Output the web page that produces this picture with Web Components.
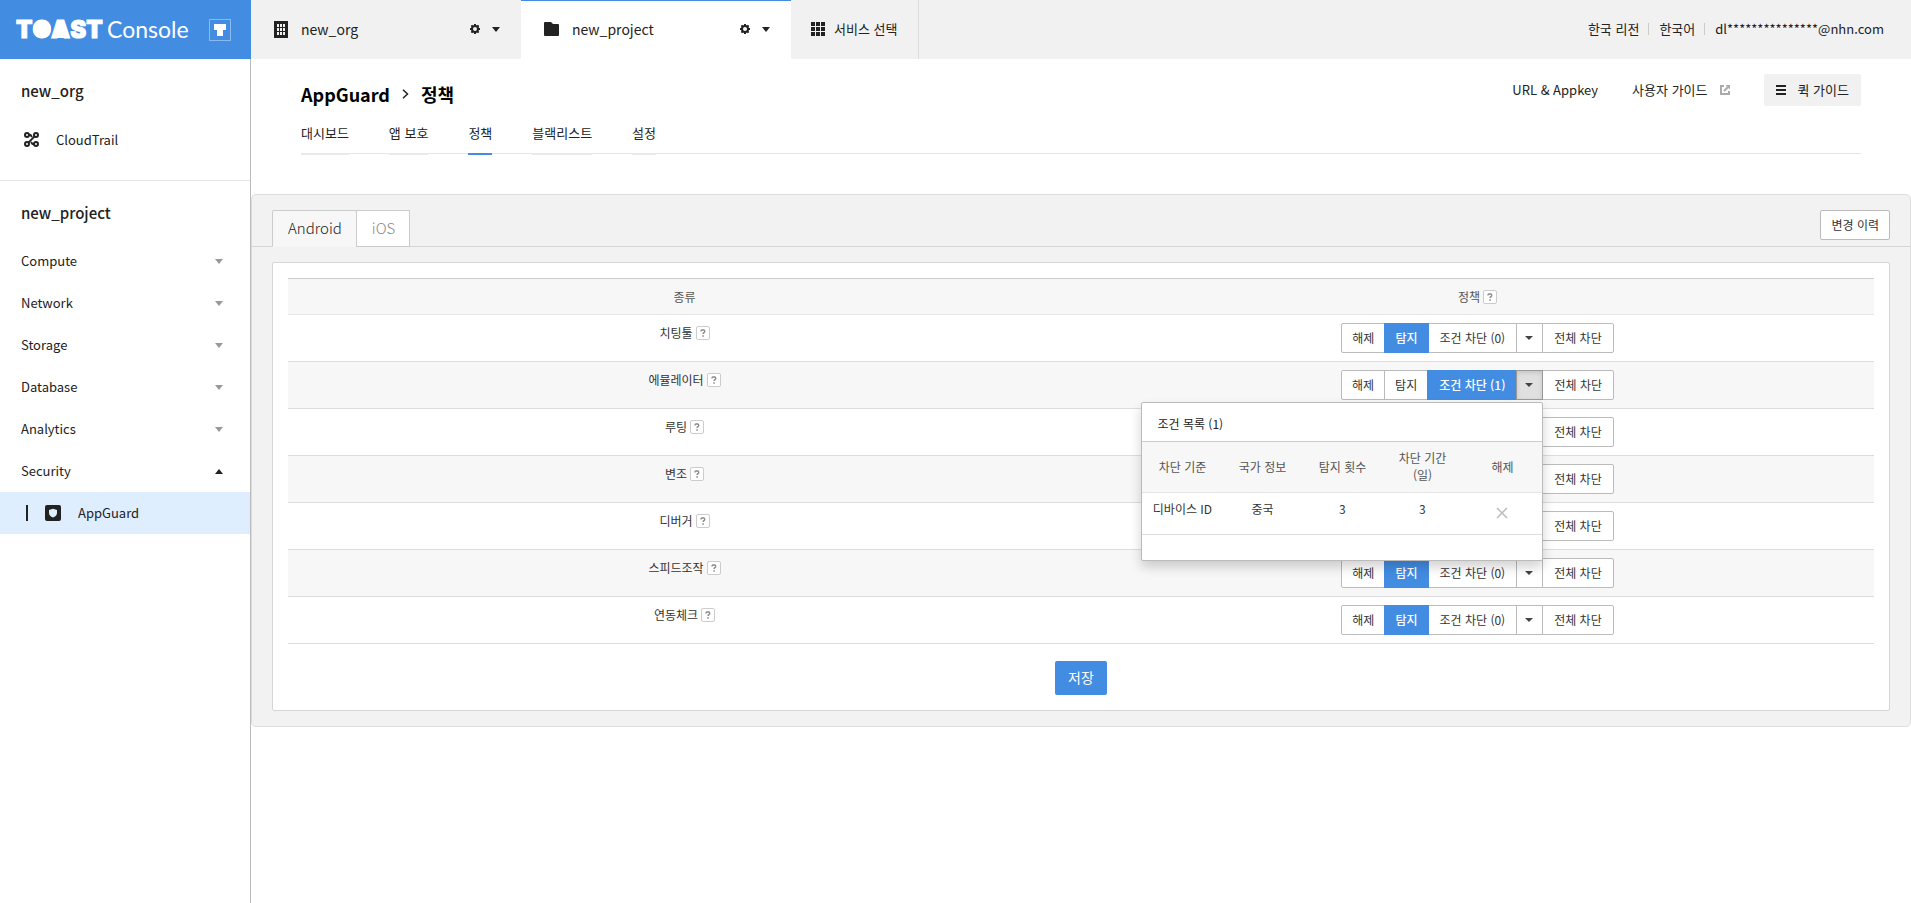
<!DOCTYPE html>
<html lang="ko">
<head>
<meta charset="utf-8">
<title>TOAST Console</title>
<style>
  html, body {
    margin: 0;
    min-height: 100vh;
  }
  body {
    --blue: #428ce2;
    --ink: #222;
    --grey: #f1f1f1;
    --line: #ddd;
    font-family: "Noto Sans CJK KR", "Noto Sans", sans-serif;
    font-size: 13px;
    line-height: 20px;
    color: var(--ink);
    background: #fff;
  }
</style>
</head>
<body>
<console-app></console-app>

<script>
(function () {
  'use strict';

  const ICONS = {
    building: '<svg width="14" height="17" viewBox="0 0 14 17"><path fill="#222" d="M0 0h14v17H0z"/><path fill="#f1f1f1" d="M3 3h2v3H3zM6 3h2v3H6zM9 3h2v3H9zM3 7h2v3H3zM6 7h2v3H6zM9 7h2v3H9zM3 11h2v3H3zM6 11h2v3H6zM9 11h2v3H9z"/></svg>',
    folder: '<svg width="15" height="14" viewBox="0 0 15 14"><path fill="#222" d="M1 0h6l2 2h5a1 1 0 0 1 1 1v10a1 1 0 0 1-1 1H1a1 1 0 0 1-1-1V1a1 1 0 0 1 1-1z"/></svg>',
    grid: '<svg width="14" height="14" viewBox="0 0 14 14"><path fill="#222" d="M0 0h4v4H0zM5 0h4v4H5zM10 0h4v4h-4zM0 5h4v4H0zM5 5h4v4H5zM10 5h4v4h-4zM0 10h4v4H0zM5 10h4v4H5zM10 10h4v4h-4z"/></svg>',
    gear: '<svg width="10" height="10" viewBox="0 0 10 10"><circle cx="5" cy="5" r="3" fill="none" stroke="#222" stroke-width="2"/><path stroke="#222" stroke-width="2" d="M5 0v2M5 8v2M0 5h2M8 5h2M1.4 1.4l1.2 1.2M7.4 7.4l1.2 1.2M8.6 1.4L7.4 2.6M2.6 7.4L1.4 8.6"/></svg>',
    down: '<svg width="8" height="5" viewBox="0 0 8 5"><path fill="currentColor" d="M0 0h8L4 5z"/></svg>',
    caret: '<svg width="8" height="4" viewBox="0 0 8 4"><path fill="currentColor" d="M0 0h8L4 4z"/></svg>',
    up: '<svg width="8" height="5" viewBox="0 0 8 5"><path fill="currentColor" d="M0 5h8L4 0z"/></svg>',
    trail: '<svg width="15" height="15" viewBox="0 0 15 15" fill="none" stroke="#222" stroke-width="2"><circle cx="3" cy="3" r="2"/><circle cx="12" cy="3" r="2"/><circle cx="3" cy="12" r="2"/><circle cx="12" cy="12" r="2"/><path d="M4.4 10.6l6.2-6.2M5 3h1.5L8 5M10 12H8.500L7 10"/></svg>',
    guard: '<svg width="16" height="16" viewBox="0 0 16 16"><rect width="16" height="16" rx="2" fill="#222"/><path fill="#dfeeff" d="M4 5l4-1.200L12 5v3c0 2.200-1.600 3.600-4 4.600C5.600 11.600 4 10.200 4 8z"/></svg>',
    external: '<svg width="10" height="10" viewBox="0 0 10 10" fill="none" stroke="#aaa" stroke-width="2"><path d="M4 1H1v8h8V6"/><path d="M4 6l4-4"/><path fill="#aaa" stroke="none" d="M5.500 0H10v4.500z"/></svg>',
    menu: '<svg width="10" height="10" viewBox="0 0 10 10"><path fill="#222" d="M0 0h10v2H0zM0 4h10v2H0zM0 8h10v2H0z"/></svg>',
    chevron: '<svg width="7" height="10" viewBox="0 0 7 10" fill="none" stroke="#222" stroke-width="1.500"><path d="M1 .7L5.500 5 1 9.300"/></svg>',
    close: '<svg width="12" height="12" viewBox="0 0 12 12" stroke="#bbb" stroke-width="1.500"><path d="M1 1l10 10M11 1L1 11"/></svg>',
    help: '<svg width="14" height="14" viewBox="0 0 14 14"><rect x=".5" y=".5" width="13" height="13" rx="1.500" fill="#fff" stroke="#ccc"/><path d="M5 5.400V5a1 1 0 0 1 1-1h1.700a1 1 0 0 1 1 1v.8c0 .9-1.700.8-1.700 2.200" fill="none" stroke="#888" stroke-width="1.300"/><path fill="#888" d="M6.300 9.300h1.500v1.400H6.300z"/></svg>',
    mark: '<svg width="22" height="22" viewBox="0 0 22 22"><rect x=".5" y=".5" width="21" height="21" fill="none" stroke="#8dbaee"/><path fill="#fff" d="M5 5h12v6h-3v6H8v-6H5z"/></svg>'
  };

  const BASE = `
    * { box-sizing: border-box; }
    a { color: inherit; text-decoration: none; }
    button { font: inherit; color: inherit; background: none; border: 0; margin: 0; padding: 0; cursor: pointer; }
    svg { display: block; }
  `;

  function define(name, css, html) {
    customElements.define(name, class extends HTMLElement {
      constructor() {
        super();
        this.attachShadow({ mode: 'open' });
      }

      connectedCallback() {
        const body = typeof html === 'function' ? html(this) : html;
        this.shadowRoot.innerHTML = `<style>${BASE}${css}</style>${body}`;
      }
    });
  }

  define('c-icon', `
    :host { display: block; flex: none; }
  `, el => ICONS[el.getAttribute('name')]);

  define('help-tip', `
    :host { display: inline-block; vertical-align: -2px; margin-left: 3px; }
    button { display: block; }
  `, '<button type="button" aria-label="도움말"><c-icon name="help"></c-icon></button>');

  // Header

  define('toast-logo', `
    :host { display: flex; align-items: center; justify-content: space-between; padding: 0 20px 0 16px; background: var(--blue); color: #fff; }
    a { display: flex; align-items: center; gap: 3px; padding-bottom: 2px; }
    .word { overflow: visible; fill: #fff; }
    .word text { font: 900 24px Inter, sans-serif; font-kerning: none; stroke: #fff; stroke-width: 1; }
    .name { font: 23px/30px Lato, sans-serif; }
  `, `
    <a href="#">
      <svg class="word" width="88" height="30" viewBox="0 0 88 30">
        <circle cx="26" cy="15" r="9"/>
        <path d="M45 6l9 18H36z"/>
        <text x="0" y="24">TOAST</text>
      </svg>
      <span class="name">Console</span>
    </a>
    <c-icon name="mark"></c-icon>
  `);

  define('context-tab', `
    :host { display: flex; align-items: center; width: 270px; padding: 0 21px 2px 23px; border-top: 1px solid transparent; font-size: 14px; }
    :host([active]) { background: #fff; border-top-color: var(--blue); }
    a { display: flex; align-items: center; gap: 13px; flex: 1; }
    button { display: block; margin-left: 12px; }
    slot { display: block; }
  `, el => `
    <a href="#"><c-icon name="${el.getAttribute('icon')}"></c-icon><slot></slot></a>
    <button type="button" aria-label="설정"><c-icon name="gear"></c-icon></button>
    <button type="button" aria-label="목록"><c-icon name="down"></c-icon></button>
  `);

  define('console-header', `
    :host { display: flex; background: var(--grey); }
    .service { display: flex; align-items: center; gap: 9px; padding: 0 21px 2px 20px; border-right: 1px solid var(--line); }
    .account { display: flex; align-items: center; margin-left: auto; padding: 0 27px 2px 0; }
    .account a + a { margin-left: 9px; padding-left: 10px; border-left: 1px solid #ccc; line-height: 12px; }
  `, `
    <context-tab icon="building">new_org</context-tab>
    <context-tab icon="folder" active>new_project</context-tab>
    <a class="service" href="#"><c-icon name="grid"></c-icon>서비스 선택</a>
    <div class="account">
      <a href="#">한국 리전</a>
      <a href="#">한국어</a>
      <a href="#">dl***************@nhn.com</a>
    </div>
  `);

  // Side navigation

  define('side-group', `
    :host { display: block; }
    h2 { margin: 0; padding: 0 21px; font-size: 15px; line-height: 24px; font-weight: 500; }
  `, el => `<h2>${el.getAttribute('label')}</h2><slot></slot>`);

  define('side-item', `
    :host { display: block; }
    button { display: flex; align-items: center; justify-content: space-between; width: 100%; height: 42px; padding: 0 27px 0 21px; }
    c-icon { color: #999; }
    :host([open]) c-icon { color: var(--ink); }
  `, el => `
    <button type="button" aria-expanded="${el.hasAttribute('open')}">${el.getAttribute('label')}<c-icon name="${el.hasAttribute('open') ? 'up' : 'down'}"></c-icon></button>
    <slot></slot>
  `);

  define('side-link', `
    :host { display: block; }
    a { display: flex; align-items: center; gap: 17px; height: 42px; padding: 0 24px 1px; }
    :host([current]) a { padding-left: 26px; background: #dfeeff; }
    :host([current]) a::before { content: ""; width: 2px; height: 16px; background: var(--ink); }
  `, el => `<a href="#"><c-icon name="${el.getAttribute('icon')}"></c-icon><slot></slot></a>`);

  define('console-sidebar', `
    :host { display: block; border-right: 1px solid #bbb; }
    .org { padding: 20px 0 19px; border-bottom: 1px solid #e5e5e5; }
    .org side-link { margin-top: 16px; }
    .project { padding-top: 20px; }
    .project side-item:first-child { margin-top: 15px; }
  `, `
    <nav>
      <side-group class="org" label="new_org">
        <side-link icon="trail">CloudTrail</side-link>
      </side-group>
      <side-group class="project" label="new_project">
        <side-item label="Compute"></side-item>
        <side-item label="Network"></side-item>
        <side-item label="Storage"></side-item>
        <side-item label="Database"></side-item>
        <side-item label="Analytics"></side-item>
        <side-item label="Security" open>
          <side-link icon="guard" current>AppGuard</side-link>
        </side-item>
      </side-group>
    </nav>
  `);

  // Page title, tools and tabs

  define('page-header', `
    :host { display: block; padding: 15px 50px 40px; }
    .top { display: flex; align-items: flex-start; justify-content: space-between; }
    h1 { display: flex; align-items: center; gap: 12px; margin: 0 0 2px; font-size: 18px; line-height: 40px; font-weight: 700; color: #000; }
    .tools { display: flex; align-items: center; gap: 34px; line-height: 32px; }
    .tools a { display: flex; align-items: center; gap: 12px; }
    .tools .quick { padding: 0 12px; border-radius: 2px; background: var(--grey); }
    nav { display: flex; gap: 40px; border-bottom: 1px solid #e5e5e5; }
    nav a { padding-bottom: 4px; line-height: 33px; border-bottom: 2px solid #e9e9e9; margin-bottom: -2px; }
    nav a[aria-current] { border-bottom-color: var(--blue); }
  `, `
    <div class="top">
      <h1><span>AppGuard</span><c-icon name="chevron"></c-icon><span>정책</span></h1>
      <div class="tools">
        <a href="#">URL &amp; Appkey</a>
        <a href="#">사용자 가이드<c-icon name="external"></c-icon></a>
        <a class="quick" href="#"><c-icon name="menu"></c-icon>퀵 가이드</a>
      </div>
    </div>
    <nav>
      <a href="#">대시보드</a>
      <a href="#">앱 보호</a>
      <a href="#" aria-current="page">정책</a>
      <a href="#">블랙리스트</a>
      <a href="#">설정</a>
    </nav>
  `);

  // Conditions of one policy, shown under its split button

  define('condition-popup', `
    :host { position: absolute; z-index: 10; top: calc(100% + 2px); right: 0; width: 402px; padding-bottom: 25px; border: 1px solid #bbb; border-radius: 2px; background: #fff; box-shadow: 0 6px 12px rgba(0, 0, 0, .18); color: #333; text-align: left; }
    h3 { margin: 0; padding: 3px 15px 0; font-size: 12px; line-height: 35px; font-weight: 400; color: #222; }
    table { width: 100%; table-layout: fixed; border-collapse: separate; border-spacing: 0; text-align: center; }
    th { height: 52px; padding: 7px 10px 9px; border-top: 1px solid #ccc; border-bottom: 1px solid #e5e5e5; background: #f7f7f7; font-weight: 400; line-height: 17px; color: #555; }
    td { height: 42px; padding: 7px 0; border-bottom: 1px solid #ddd; line-height: 17px; vertical-align: top; white-space: nowrap; }
    td button { display: block; margin: 7px auto 0; }
  `, `
    <h3>조건 목록 (1)</h3>
    <table>
      <thead>
        <tr><th>차단 기준</th><th>국가 정보</th><th>탐지 횟수</th><th>차단 기간 (일)</th><th>해제</th></tr>
      </thead>
      <tbody>
        <tr>
          <td>디바이스 ID</td><td>중국</td><td>3</td><td>3</td>
          <td><button type="button" aria-label="해제"><c-icon name="close"></c-icon></button></td>
        </tr>
      </tbody>
    </table>
  `);

  define('policy-switch', `
    :host { display: inline-flex; vertical-align: top; }
    button { position: relative; height: 30px; padding: 0 10px; border: 1px solid #bbb; background: #fff; color: #333; }
    button.wide { padding: 0 11px; }
    .split { position: relative; display: flex; }
    button + button, .split, .split + button { margin-left: -1px; }
    :host > button:first-of-type { border-radius: 2px 0 0 2px; }
    :host > button:last-of-type { border-radius: 0 2px 2px 0; }
    button.on { z-index: 1; border-color: var(--blue); background: var(--blue); color: #fff; font-weight: 500; }
    .caret { width: 27px; padding: 0 9px 0 8px; color: #444; }
    .caret[aria-expanded="true"] { z-index: 2; border-color: #999; background: #e0e0e0; box-shadow: inset 0 2px 4px rgba(0, 0, 0, .12); }
  `, el => {
    const on = el.getAttribute('value');
    const open = el.hasAttribute('open');
    const button = (key, text, size = '') =>
      `<button type="button" class="${size}${key === on ? ' on' : ''}" aria-pressed="${key === on}">${text}</button>`;
    return `
      ${button('off', '해제')}
      ${button('detect', '탐지')}
      <div class="split">
        ${button('condition', `조건 차단 (${el.getAttribute('count')})`, 'wide')}
        <button type="button" class="caret" aria-label="조건 목록" aria-expanded="${open}"><c-icon name="caret"></c-icon></button>
        ${open ? '<condition-popup></condition-popup>' : ''}
      </div>
      ${button('block', '전체 차단', 'wide')}
    `;
  });

  const POLICIES = [
    { name: '치팅툴', value: 'detect', count: 0 },
    { name: '에뮬레이터', value: 'condition', count: 1, open: true },
    { name: '루팅', value: 'detect', count: 0 },
    { name: '변조', value: 'detect', count: 0 },
    { name: '디버거', value: 'detect', count: 0 },
    { name: '스피드조작', value: 'detect', count: 0 },
    { name: '연동체크', value: 'detect', count: 0 }
  ];

  define('policy-table', `
    :host { display: block; font-size: 12px; }
    table { width: 100%; table-layout: fixed; border-collapse: separate; border-spacing: 0; text-align: center; }
    th { height: 37px; padding: 0; border-top: 1px solid #ccc; border-bottom: 1px solid #e5e5e5; background: #f7f7f7; font-weight: 400; color: #555; }
    td { padding: 8px; border-bottom: 1px solid var(--line); vertical-align: top; color: #333; }
    tbody tr:nth-child(even) td { background: #f7f7f7; }
  `, () => `
    <table>
      <thead><tr><th>종류</th><th>정책<help-tip></help-tip></th></tr></thead>
      <tbody>
        ${POLICIES.map(p => `
          <tr>
            <td>${p.name}<help-tip></help-tip></td>
            <td><policy-switch value="${p.value}" count="${p.count}"${p.open ? ' open' : ''}></policy-switch></td>
          </tr>`).join('')}
      </tbody>
    </table>
  `);

  define('policy-panel', `
    :host { display: block; border: 1px solid var(--line); border-radius: 5px; background: #f2f2f2; }
    .head { display: flex; align-items: flex-start; justify-content: space-between; padding: 15px 20px 0; border-bottom: 1px solid #d5d5d5; }
    .tabs { display: flex; margin-bottom: -1px; }
    .tabs button { height: 37px; padding: 0 14px 2px 15px; border: 1px solid #ccc; background: #fff; font-size: 15px; font-weight: 300; color: #888; }
    .tabs button + button { margin-left: -1px; }
    .tabs button[aria-selected="true"] { border-bottom-color: #f7f7f7; border-radius: 2px 2px 0 0; background: #f7f7f7; color: var(--ink); }
    .history { height: 30px; padding: 0 10px; border: 1px solid #bbb; border-radius: 2px; background: #fff; font-size: 12px; color: #333; }
    .box { margin: 15px 20px; padding: 15px; border: 1px solid #d5d5d5; border-radius: 2px; background: #fff; text-align: center; }
    .save { height: 34px; margin-top: 17px; padding: 0 13px 2px; border-radius: 2px; background: var(--blue); color: #fff; font-size: 14px; vertical-align: top; }
  `, `
    <div class="head">
      <div class="tabs" role="tablist">
        <button type="button" role="tab" aria-selected="true">Android</button>
        <button type="button" role="tab" aria-selected="false">iOS</button>
      </div>
      <button type="button" class="history">변경 이력</button>
    </div>
    <div class="box">
      <slot></slot>
      <button type="button" class="save">저장</button>
    </div>
  `);

  define('console-app', `
    :host { display: grid; grid-template-columns: 251px 1fr; grid-template-rows: 59px 1fr; min-height: 100vh; }
    main { min-width: 0; }
  `, `
    <toast-logo></toast-logo>
    <console-header></console-header>
    <console-sidebar></console-sidebar>
    <main>
      <page-header></page-header>
      <policy-panel><policy-table></policy-table></policy-panel>
    </main>
  `);
})();
</script>
</body>
</html>
